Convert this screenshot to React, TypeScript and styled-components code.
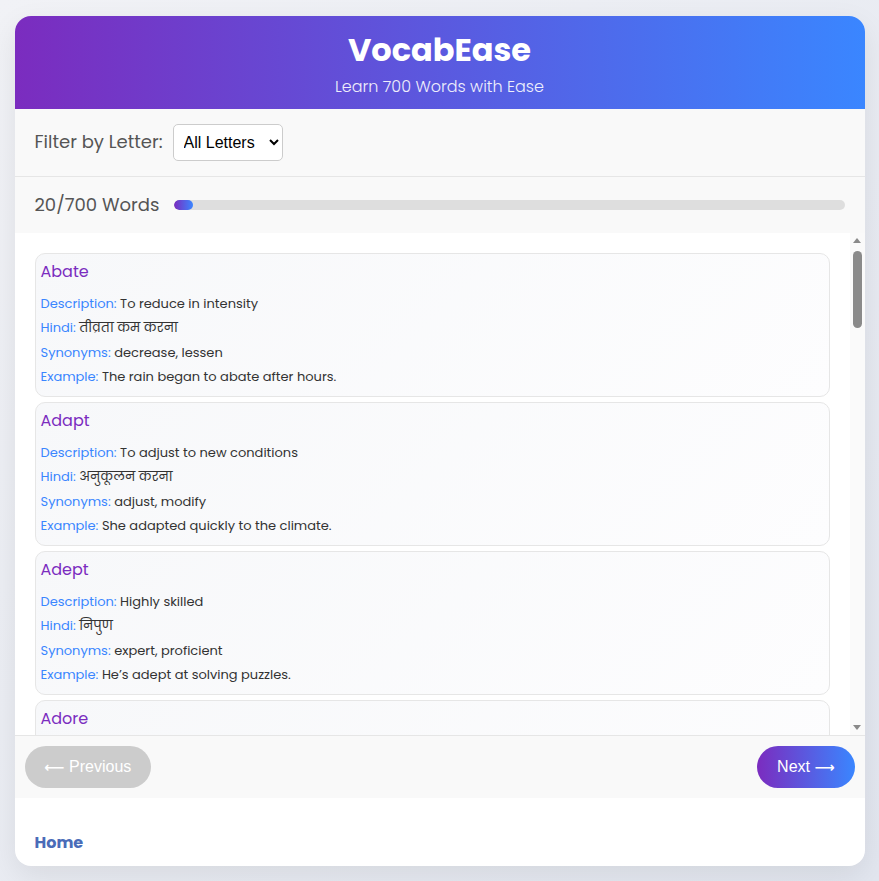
import React from "react";
import styled, { createGlobalStyle } from "styled-components";

const GlobalStyle = createGlobalStyle`
  * { box-sizing: border-box; }
  html, body { margin: 0; padding: 0; }
  body {
    font-family: Poppins, "Open Sans", "Noto Sans", "Noto Sans Devanagari", sans-serif;
    background: linear-gradient(135deg, #f1f2f6 0%, #e2e6ef 100%);
    min-height: 100vh;
  }
`;

const Page = styled.div`
  min-height: 100vh;
  display: flex;
  align-items: center;
  justify-content: center;
`;

const Card = styled.div`
  width: 850px;
  height: 850px;
  background: #ffffff;
  border-radius: 16px;
  box-shadow: 0 10px 30px rgba(0, 0, 0, 0.08);
  overflow: hidden;
  display: flex;
  flex-direction: column;
`;

const Header = styled.header`
  background: linear-gradient(90deg, #7b2cbf 0%, #3a86ff 100%);
  color: #fff;
  text-align: center;
  padding: 10px 20px 10px;
`;

const Title = styled.h1`
  margin: 0;
  font-size: 32px;
  line-height: 48px;
  font-weight: 700;
`;

const Subtitle = styled.p`
  margin: 1px 0 0;
  font-size: 16px;
  line-height: 24px;
  font-weight: 300;
  opacity: 0.9;
`;

const Bar = styled.div<{ $border?: boolean }>`
  background: #f9f9f9;
  padding: 15px 20px;
  display: flex;
  align-items: center;
  border-bottom: ${(p) => (p.$border ? "1px solid #e6e6e6" : "none")};
`;

const Label = styled.span<{ $gap: number }>`
  font-size: 18px;
  line-height: 26px;
  color: #555;
  margin-right: ${(p) => p.$gap}px;
  white-space: nowrap;
`;

const Select = styled.select`
  height: 37px;
  width: 110px;
  padding: 0 6px;
  font-family: "Liberation Sans", Arial, sans-serif;
  font-size: 16px;
  color: #000;
  background: #fff;
  border: 1px solid #ccc;
  border-radius: 5px;
`;

const Track = styled.div`
  flex: 1;
  height: 10px;
  border-radius: 5px;
  background: #dedede;
  overflow: hidden;
`;

const Fill = styled.div`
  height: 100%;
  border-radius: 5px;
  background: linear-gradient(90deg, #7b2cbf, #3a86ff);
`;

const ListArea = styled.div`
  flex: 1;
  min-height: 0;
  display: flex;
  background: #fff;
`;

const List = styled.div`
  flex: 1;
  min-width: 0;
  overflow-y: auto;
  scrollbar-width: none;
  padding: 20px;
  display: flex;
  flex-direction: column;
  gap: 5px;
  &::-webkit-scrollbar { display: none; }
`;

const Rail = styled.div`
  width: 15px;
  flex-shrink: 0;
  background: #fafafa;
  display: flex;
  flex-direction: column;
  align-items: center;
`;

const RailArrow = styled.div<{ $down?: boolean }>`
  width: 15px;
  height: 15px;
  flex-shrink: 0;
  display: flex;
  align-items: center;
  justify-content: center;
  &::before {
    content: "";
    width: 0;
    height: 0;
    border-left: 4.5px solid transparent;
    border-right: 4.5px solid transparent;
    ${(p) => (p.$down ? "border-top: 5px solid #8a8a8a;" : "border-bottom: 5px solid #8a8a8a;")}
  }
`;

const RailTrack = styled.div`
  flex: 1;
  width: 100%;
  display: flex;
  justify-content: center;
  padding-top: 3px;
`;

const Thumb = styled.div`
  width: 9px;
  border-radius: 5px;
  background: #8a8a8a;
`;

const WordCard = styled.div`
  flex-shrink: 0;
  border: 1px solid #e6e6e6;
  border-radius: 10px;
  background: linear-gradient(135deg, #f7f8fa 0%, #fdfdfe 100%);
  padding: 6px 5px 6px;
`;

const WordTitle = styled.h3`
  margin: 0 0 8px;
  font-size: 16px;
  line-height: 24px;
  font-weight: 400;
  color: #7b2cbf;
`;

const Line = styled.p`
  margin: 0;
  font-size: 13px;
  line-height: 24.5px;
  color: #333;
`;

const Key = styled.span`
  color: #3a86ff;
  font-weight: 400;
`;

const Nav = styled.div`
  background: #f9f9f9;
  border-top: 1px solid #e6e6e6;
  padding: 10px;
  display: flex;
  justify-content: space-between;
`;

const NavButton = styled.button<{ $primary?: boolean }>`
  height: 42px;
  padding: 0 20px;
  border: none;
  border-radius: 21px;
  font-family: "Liberation Sans", Arial, "DejaVu Sans", sans-serif;
  font-size: 16px;
  color: #fff;
  background: ${(p) => (p.$primary ? "linear-gradient(90deg, #7b2cbf, #3a86ff)" : "#cccccc")};
`;

const Arrow = styled.span`
  font-size: 14px;
  font-weight: 700;
`;

const Footer = styled.footer`
  height: 68px;
  padding: 0 20px 11px;
  display: flex;
  align-items: flex-end;
`;

const HomeLink = styled.a`
  font-size: 16px;
  line-height: 24px;
  font-weight: 700;
  color: #4a6cb8;
  text-decoration: none;
`;

const words = [
  ["Abate", "To reduce in intensity", "तीव्रता कम करना", "decrease, lessen", "The rain began to abate after hours."],
  ["Adapt", "To adjust to new conditions", "अनुकूलन करना", "adjust, modify", "She adapted quickly to the climate."],
  ["Adept", "Highly skilled", "निपुण", "expert, proficient", "He’s adept at solving puzzles."],
  ["Adore", "To love deeply", "प्यार करना", "love, cherish", "She adores her little brother."],
  ["Affluent", "Wealthy", "धनी", "rich, prosperous", "They live in an affluent area."],
  ["Agile", "Able to move quickly", "फुर्तीला", "nimble, quick", "The cat is very agile."],
  ["Alleviate", "To make less severe", "कम करना", "ease, relieve", "The medicine alleviated the pain."],
  ["Ambiguous", "Having more than one meaning", "अस्पष्ट", "unclear, vague", "His answer was ambiguous."],
  ["Amiable", "Friendly and pleasant", "मिलनसार", "friendly, genial", "She has an amiable nature."],
  ["Anomaly", "Something unusual", "विसंगति", "oddity, irregularity", "The result was an anomaly."],
  ["Apathy", "Lack of interest", "उदासीनता", "indifference, disinterest", "Voter apathy was high."],
  ["Ardent", "Very enthusiastic", "उत्साही", "passionate, eager", "He is an ardent fan."],
  ["Articulate", "Able to express clearly", "स्पष्टवादी", "eloquent, expressive", "She is an articulate speaker."],
  ["Astute", "Clever and sharp", "चतुर", "shrewd, smart", "He made an astute decision."],
  ["Audacious", "Bold and daring", "साहसी", "bold, daring", "It was an audacious plan."],
  ["Augment", "To increase", "बढ़ाना", "boost, enlarge", "He augmented his income."],
  ["Austere", "Severe or strict", "कठोर", "strict, stern", "The room was austere."],
  ["Authentic", "Genuine", "प्रामाणिक", "real, genuine", "This is an authentic painting."],
  ["Avid", "Very eager", "उत्सुक", "keen, enthusiastic", "She is an avid reader."],
  ["Awe", "Feeling of wonder", "विस्मय", "wonder, amazement", "They watched in awe."],
];

export default function App() {
  return (
    <>
      <GlobalStyle />
      <Page>
        <Card>
          <Header>
            <Title>VocabEase</Title>
            <Subtitle>Learn 700 Words with Ease</Subtitle>
          </Header>
          <Bar $border>
            <Label $gap={10}>Filter by Letter:</Label>
            <Select defaultValue="all">
              <option value="all">All Letters</option>
            </Select>
          </Bar>
          <Bar>
            <Label $gap={15}>20/700 Words</Label>
            <Track>
              <Fill style={{ width: `${(20 / 700) * 100}%` }} />
            </Track>
          </Bar>
          <ListArea>
            <List>
              {words.map(([w, d, h, s, e]) => (
                <WordCard key={w}>
                  <WordTitle>{w}</WordTitle>
                  <Line><Key>Description:</Key> {d}</Line>
                  <Line><Key>Hindi:</Key> {h}</Line>
                  <Line><Key>Synonyms:</Key> {s}</Line>
                  <Line><Key>Example:</Key> {e}</Line>
                </WordCard>
              ))}
            </List>
            <Rail>
              <RailArrow />
              <RailTrack>
                <Thumb style={{ height: 77 }} />
              </RailTrack>
              <RailArrow $down />
            </Rail>
          </ListArea>
          <Nav>
            <NavButton><Arrow>⟵</Arrow> Previous</NavButton>
            <NavButton $primary>Next <Arrow>⟶</Arrow></NavButton>
          </Nav>
          <Footer>
            <HomeLink href="#">Home</HomeLink>
          </Footer>
        </Card>
      </Page>
    </>
  );
}
